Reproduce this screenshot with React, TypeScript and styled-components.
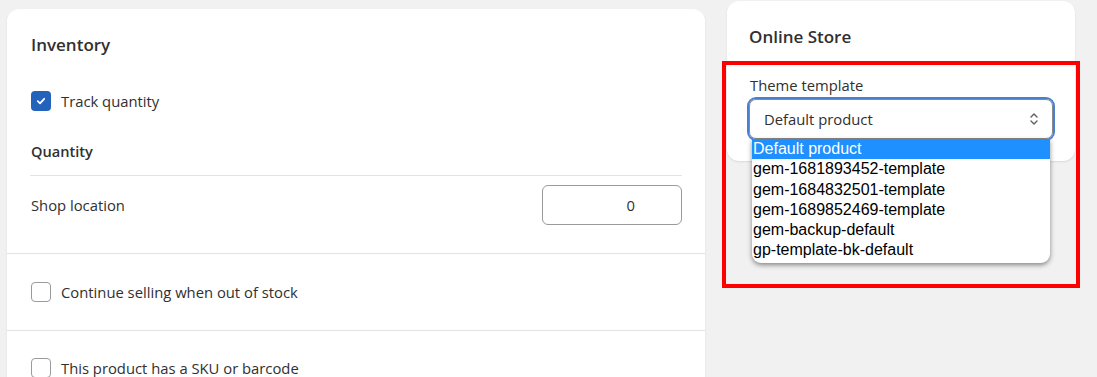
import React from 'react';
import styled, { createGlobalStyle } from 'styled-components';

const GlobalStyle = createGlobalStyle`
  * {
    box-sizing: border-box;
  }
  body {
    margin: 0;
    background: #f1f1f2;
    font-family: 'Open Sans', 'Noto Sans', sans-serif;
    color: #303030;
  }
`;

const templates = [
  'Default product',
  'gem-1681893452-template',
  'gem-1684832501-template',
  'gem-1689852469-template',
  'gem-backup-default',
  'gp-template-bk-default',
];

const CheckIcon = () => (
  <svg width="12" height="12" viewBox="0 0 12 12" fill="none">
    <path
      d="M2.8 6.2l2.2 2.2 4.2-4.6"
      stroke="#fff"
      strokeWidth="1.8"
      strokeLinecap="round"
      strokeLinejoin="round"
    />
  </svg>
);

const SelectIcon = () => (
  <svg width="12" height="16" viewBox="0 0 12 16" fill="none">
    <path
      d="M3 6l3-3 3 3M3 10l3 3 3-3"
      stroke="#5c5f62"
      strokeWidth="1.4"
      strokeLinecap="round"
      strokeLinejoin="round"
    />
  </svg>
);

const App = () => {
  return (
    <>
      <GlobalStyle />
      <Page>
        <InventoryCard>
          <Section $pt={22} $pb={28}>
            <Title>Inventory</Title>
            <CheckRow $mt={32}>
              <Box $checked>
                <CheckIcon />
              </Box>
              <Label>Track quantity</Label>
            </CheckRow>
            <SubTitle>Quantity</SubTitle>
            <Divider />
            <FieldRow>
              <Label>Shop location</Label>
              <QtyInput>0</QtyInput>
            </FieldRow>
          </Section>
          <Section $pt={28} $pb={28}>
            <CheckRow>
              <Box />
              <Label>Continue selling when out of stock</Label>
            </CheckRow>
          </Section>
          <Section $pt={27} $pb={28}>
            <CheckRow>
              <Box />
              <Label>This product has a SKU or barcode</Label>
            </CheckRow>
          </Section>
        </InventoryCard>

        <SideColumn>
          <StoreCard>
            <Title>Online Store</Title>
            <FieldLabel>Theme template</FieldLabel>
            <SelectWrap>
              <SelectBox>
                <span>Default product</span>
                <SelectIcon />
              </SelectBox>
              <OptionList>
                {templates.map((t, i) => (
                  <Option key={t} $active={i === 0}>
                    {t}
                  </Option>
                ))}
              </OptionList>
            </SelectWrap>
          </StoreCard>
          <Highlight />
        </SideColumn>
      </Page>
    </>
  );
};

export default App;

const Page = styled.div`
  display: flex;
  align-items: flex-start;
  gap: 22px;
  padding-left: 7px;
  height: 377px;
  overflow: hidden;
`;

const InventoryCard = styled.div`
  width: 698px;
  margin-top: 9px;
  background: #fff;
  border-radius: 12px;
  box-shadow: 0 1px 2px rgba(0, 0, 0, 0.1);
`;

const Section = styled.div<{ $pt: number; $pb: number }>`
  padding: ${(p) => p.$pt}px 23px ${(p) => p.$pb}px 24px;
  border-bottom: 1px solid #e3e3e3;
  &:last-child {
    border-bottom: none;
  }
`;

const Title = styled.h2`
  margin: 0;
  font-size: 17px;
  line-height: 28px;
  font-weight: 600;
  color: #303030;
`;

const CheckRow = styled.div<{ $mt?: number }>`
  display: flex;
  align-items: center;
  gap: 10px;
  height: 20px;
  margin-top: ${(p) => p.$mt ?? 0}px;
`;

const Box = styled.span<{ $checked?: boolean }>`
  display: flex;
  align-items: center;
  justify-content: center;
  width: 20px;
  height: 20px;
  border-radius: 4px;
  background: ${(p) => (p.$checked ? '#2463bc' : '#fff')};
  border: ${(p) => (p.$checked ? 'none' : '1.5px solid #9a9a9a')};
`;

const Label = styled.span`
  font-size: 14.8px;
  line-height: 20px;
  color: #303030;
`;

const SubTitle = styled.h3`
  margin: 30px 0 0;
  font-size: 14.6px;
  line-height: 20px;
  font-weight: 600;
`;

const Divider = styled.hr`
  margin: 14px 0 0 -1px;
  border: none;
  border-top: 1px solid #e3e3e3;
`;

const FieldRow = styled.div`
  display: flex;
  align-items: center;
  justify-content: space-between;
  margin-top: 9px;
`;

const QtyInput = styled.div`
  width: 140px;
  height: 40px;
  border: 1px solid #999;
  border-radius: 6px;
  padding-right: 46px;
  text-align: right;
  font-size: 14.8px;
  line-height: 38px;
`;

const SideColumn = styled.div`
  position: relative;
  width: 348px;
  margin-top: 1px;
`;

const StoreCard = styled.div`
  background: #fff;
  border-radius: 12px;
  padding: 22px;
  box-shadow: 0 1px 2px rgba(0, 0, 0, 0.1);
`;

const FieldLabel = styled.div`
  margin-top: 24px;
  font-size: 14.8px;
  line-height: 20px;
  padding-left: 1px;
`;

const SelectWrap = styled.div`
  position: relative;
  margin-top: 4px;
`;

const SelectBox = styled.div`
  display: flex;
  align-items: center;
  justify-content: space-between;
  height: 40px;
  padding: 0 12px 0 14px;
  border: 1px solid #8a8a8a;
  border-radius: 7px;
  outline: 2px solid #4a80d0;
  font-size: 14.8px;
`;

const OptionList = styled.ul`
  position: absolute;
  top: 100%;
  left: 3px;
  width: 298px;
  margin: 0;
  padding: 0 0 2px;
  list-style: none;
  background: #fff;
  border-radius: 0 0 9px 9px;
  box-shadow: 0 2px 5px rgba(0, 0, 0, 0.45);
  overflow: hidden;
  z-index: 2;
`;

const Option = styled.li<{ $active?: boolean }>`
  height: 20.3px;
  padding-left: 1px;
  font-family: 'Liberation Sans', Arial, sans-serif;
  font-size: 16px;
  line-height: 20px;
  color: ${(p) => (p.$active ? '#fff' : '#000')};
  background: ${(p) => (p.$active ? '#1e90ff' : 'transparent')};
`;

const Highlight = styled.div`
  position: absolute;
  top: 60px;
  left: -5px;
  width: 358px;
  height: 227px;
  border: 4px solid #ff0000;
  pointer-events: none;
  z-index: 3;
`;
